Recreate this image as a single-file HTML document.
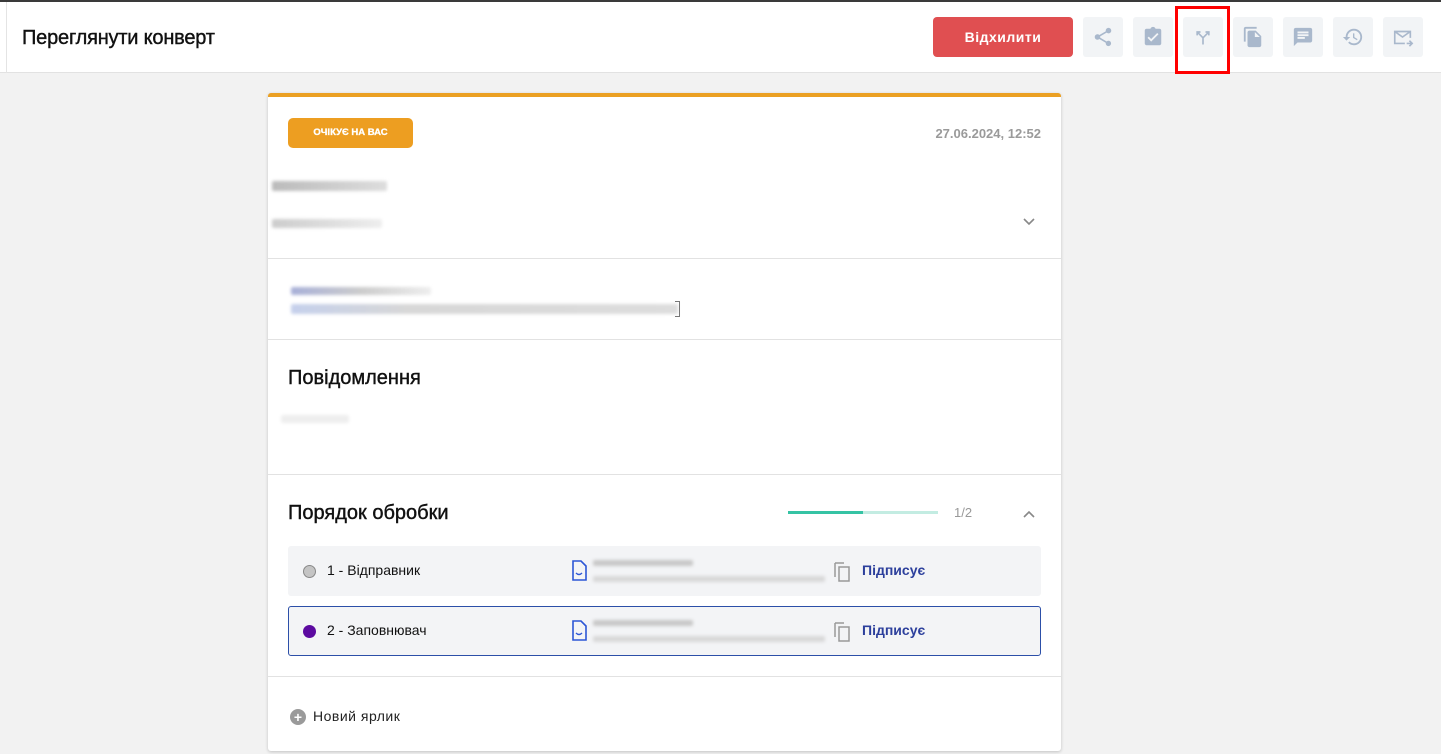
<!DOCTYPE html><html><head><meta charset="utf-8"><style>
*{box-sizing:border-box;margin:0;padding:0}
body{width:1441px;height:754px;background:#f2f2f2;font-family:"Liberation Sans",sans-serif;position:relative;overflow:hidden}
.top{position:absolute;left:0;top:0;width:1441px;height:73px;background:#fff;border-top:2px solid #3a3a3a;border-bottom:1px solid #e2e2e2}
.top .lb{position:absolute;left:6px;top:0;width:1px;height:71px;background:#e4e4e4}
h1{position:absolute;left:22px;top:25px;font-size:20px;font-weight:normal;color:#111;letter-spacing:-.2px;-webkit-text-stroke:.4px #111}
.rej{position:absolute;left:933px;top:15px;width:140px;height:40px;background:#e04f51;border-radius:4px;color:#fff;font-weight:bold;font-size:14px;text-align:center;line-height:40px;letter-spacing:.5px}
.ib{position:absolute;top:15px;width:40px;height:40px;background:#f2f4f6;border-radius:3px;display:flex;align-items:center;justify-content:center}
.red{position:absolute;left:1175px;top:4px;width:55px;height:68px;border:3px solid #f00}
.card{position:absolute;left:268px;top:93px;width:793px;height:658px;background:#fff;border-top:4px solid #eba023;border-radius:3px;box-shadow:0 1px 3px rgba(0,0,0,.2)}
.sep{position:absolute;left:0;width:793px;height:1px;background:#e2e2e2}
.badge{position:absolute;left:20px;top:21px;width:125px;height:30px;background:#ed9e21;border-radius:5px;color:#fff;font-size:9.5px;font-weight:bold;text-align:center;line-height:30px;-webkit-text-stroke:.3px #fff}
.blur{position:absolute;filter:blur(1.5px);border-radius:2px}
.t{position:absolute;font-size:20px;color:#111;-webkit-text-stroke:.4px #111}
.row{position:absolute;left:20px;width:753px;height:50px;background:#f3f4f6;border-radius:3px;font-size:14px;color:#111}
.row span{position:absolute;top:16px}
.dot{position:absolute;left:15px;top:19px;width:13px;height:13px;border-radius:50%}
.sg{position:absolute;left:574px;top:16px;color:#2c3f9c;font-weight:bold;font-size:14px}
</style></head><body>
<div class="top"><div class="lb"></div>
<h1>Переглянути конверт</h1>
<div class="rej">Відхилити</div>
<div class="ib" style="left:1083px"><svg width="22" height="22" viewBox="0 0 24 24"><path fill="#a9b8cc" d="M18 16.1c-.8 0-1.4.3-2 .8l-7.1-4.2c.1-.2.1-.5.1-.7s0-.5-.1-.7L16 7.2c.5.5 1.2.8 2 .8 1.7 0 3-1.3 3-3s-1.3-3-3-3-3 1.300-3 3c0 .2 0 .5.1.7L8 9.8C7.5 9.3 6.8 9 6 9c-1.7 0-3 1.3-3 3s1.3 3 3 3c.8 0 1.5-.3 2-.8l7.1 4.2c-.1.2-.1.4-.1.6 0 1.6 1.3 2.9 2.9 2.9s2.9-1.3 2.9-2.9-1.2-2.9-2.8-2.9z"/></svg></div>
<div class="ib" style="left:1133px"><svg width="22" height="22" viewBox="0 0 24 24"><path fill="#a9b8cc" d="M19 3h-4.2C14.4 1.8 13.3 1 12 1s-2.4.8-2.8 2H5c-1.1 0-2 .9-2 2v14c0 1.1.9 2 2 2h14c1.1 0 2-.9 2-2V5c0-1.1-.9-2-2-2zm-9 14l-4-4 1.4-1.4 2.6 2.6 6.6-6.6L18 9l-8 8z"/></svg></div>
<div class="ib" style="left:1183px"><svg width="20" height="20" viewBox="0 0 24 24" fill="none" stroke="#a9b8cc" stroke-width="2"><path d="M12 21v-8L6 7M12 13l6-6M5 10V6h4M19 10V6h-4"/></svg></div>
<div class="ib" style="left:1233px"><svg width="22" height="22" viewBox="0 0 24 24"><path fill="#a9b8cc" d="M16 1H4c-1.1 0-2 .9-2 2v14h2V3h12V1zm-1 4l6 6v10c0 1.1-.9 2-2 2H8c-1.1 0-2-.9-2-2V7c0-1.1.9-2 2-2h7zm-1 7h5.5L14 6.5V12z"/></svg></div>
<div class="ib" style="left:1283px"><svg width="22" height="22" viewBox="0 0 24 24"><path fill="#a9b8cc" d="M20 2H4c-1.1 0-2 .9-2 2v18l4-4h14c1.1 0 2-.9 2-2V4c0-1.1-.9-2-2-2zM6 9h12v2H6V9zm8 5H6v-2h8v2zm4-6H6V6h12v2z"/></svg></div>
<div class="ib" style="left:1333px"><svg width="22" height="22" viewBox="0 0 24 24"><path fill="#a9b8cc" d="M13 3c-5 0-9 4-9 9H1l3.9 3.9L9 12H6c0-3.9 3.1-7 7-7s7 3.1 7 7-3.1 7-7 7c-1.9 0-3.7-.8-4.9-2.1l-1.4 1.4C8.3 20 10.5 21 13 21c5 0 9-4 9-9s-4-9-9-9zm-1 5v5l4.3 2.5.7-1.2-3.5-2.1V8H12z"/></svg></div>
<div class="ib" style="left:1383px"><svg width="22" height="22" viewBox="0 0 24 24" fill="none" stroke="#a9b8cc" stroke-width="1.8"><path d="M20 13V6H3v13h11M3 6l8.5 6L20 6M16 19h6M19 16l3 3-3 3"/></svg></div>
<div class="red"></div>
</div>
<div class="card">
<div class="badge">ОЧІКУЄ НА ВАС</div>
<div style="position:absolute;right:20px;top:29px;font-size:13px;font-weight:bold;color:#9a9a9a">27.06.2024, 12:52</div>
<div class="blur" style="left:4px;top:84px;width:115px;height:10px;background:linear-gradient(90deg,#bbb,#ddd)"></div>
<div class="blur" style="left:4px;top:122px;width:110px;height:9px;background:linear-gradient(90deg,#ccc,#eee)"></div>
<svg style="position:absolute;left:754px;top:120px" width="14" height="10" viewBox="0 0 14 10"><path d="M2 2l5 5 5-5" fill="none" stroke="#888" stroke-width="1.6"/></svg>
<div class="sep" style="top:161px"></div>
<div class="blur" style="left:23px;top:190px;width:140px;height:8px;background:linear-gradient(90deg,#a8b0d8,#ccc,#eee)"></div>
<div class="blur" style="left:23px;top:207px;width:387px;height:10px;background:linear-gradient(90deg,#c5d0ec,#d7d7d7 30%,#ddd)"></div>
<div style="position:absolute;left:407px;top:204px;width:5px;height:16px;border:1.5px solid #777;border-left:none"></div>
<div class="sep" style="top:242px"></div>
<div class="t" style="left:20px;top:270px">Повідомлення</div>
<div class="blur" style="left:13px;top:318px;width:68px;height:8px;background:#eee"></div>
<div class="sep" style="top:377px"></div>
<div class="t" style="left:20px;top:405px">Порядок обробки</div>
<div style="position:absolute;left:520px;top:414px;width:150px;height:3px;background:#c3ece2"><div style="width:75px;height:3px;background:#35c3a4"></div></div>
<div style="position:absolute;left:686px;top:408px;font-size:13px;color:#999">1/2</div>
<svg style="position:absolute;left:754px;top:412px" width="14" height="10" viewBox="0 0 14 10"><path d="M2 8l5-5 5 5" fill="none" stroke="#888" stroke-width="1.6"/></svg>
<div class="row" style="top:449px"><div class="dot" style="background:#c4c4c4;border:1px solid #888"></div><span style="left:39px">1 - Відправник</span>
<svg style="position:absolute;left:283px;top:14px" width="16" height="22" viewBox="0 0 16 22"><path d="M2 1h8l5 5v14H2z" fill="none" stroke="#2c56d6" stroke-width="1.6"/><path d="M5 13q3 3 6 0" fill="none" stroke="#2c56d6" stroke-width="1.4"/></svg>
<div class="blur" style="left:305px;top:14px;width:100px;height:6px;background:#c8c8c8"></div><div class="blur" style="left:305px;top:30px;width:232px;height:6px;background:#d8d8d8"></div>
<svg style="position:absolute;left:545px;top:14px" width="18" height="22" viewBox="0 0 18 22"><path d="M2 3v14M2 3h9M6 7h10v14H6z" fill="none" stroke="#999" stroke-width="1.5"/></svg>
<div class="sg">Підписує</div></div>
<div class="row" style="top:509px;border:1px solid #2c4fa8"><div class="dot" style="background:#5c0aa0;left:14px;top:18px"></div><span style="left:38px;top:15px">2 - Заповнювач</span>
<svg style="position:absolute;left:282px;top:13px" width="16" height="22" viewBox="0 0 16 22"><path d="M2 1h8l5 5v14H2z" fill="none" stroke="#2c56d6" stroke-width="1.6"/><path d="M5 13q3 3 6 0" fill="none" stroke="#2c56d6" stroke-width="1.4"/></svg>
<div class="blur" style="left:304px;top:13px;width:100px;height:6px;background:#c8c8c8"></div><div class="blur" style="left:304px;top:29px;width:232px;height:6px;background:#d8d8d8"></div>
<svg style="position:absolute;left:544px;top:13px" width="18" height="22" viewBox="0 0 18 22"><path d="M2 3v14M2 3h9M6 7h10v14H6z" fill="none" stroke="#999" stroke-width="1.5"/></svg>
<div class="sg" style="left:573px;top:15px">Підписує</div></div>
<div class="sep" style="top:579px"></div>
<div style="position:absolute;left:22px;top:612px;width:16px;height:16px;border-radius:50%;background:#9a9a9a;color:#fff;font-size:14px;line-height:16px;text-align:center;font-weight:bold">+</div>
<div style="position:absolute;left:45px;top:611px;font-size:14px;color:#222;letter-spacing:.5px">Новий ярлик</div>
</div>
</body></html>
